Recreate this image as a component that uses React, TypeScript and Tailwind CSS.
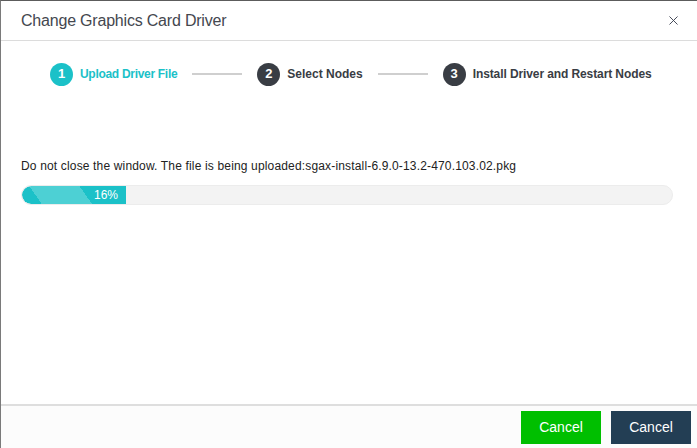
import { X } from 'lucide-react';

const steps = [
  { n: 1, label: 'Upload Driver File', active: true, track: 'tracking-[-0.3px]' },
  { n: 2, label: 'Select Nodes', active: false, track: 'tracking-[0px]' },
  { n: 3, label: 'Install Driver and Restart Nodes', active: false, track: 'tracking-[-0.1px]' },
];

export default function App() {
  const progress = 16;

  return (
    <div className="w-[697px] h-[448px] bg-white flex flex-col border-t border-t-[#5c5c5c] border-l border-l-[#7a7a7a] font-['Liberation_Sans',Arial,sans-serif] text-[#333] overflow-hidden">
      {/* header */}
      <div className="h-[40px] shrink-0 flex items-center justify-between pl-[20px] pr-[16px] border-b border-[#dcdcdc]">
        <span className="text-[16px] text-[#44474f] tracking-[-0.2px]">Change Graphics Card Driver</span>
        <X className="w-[15px] h-[15px] text-[#3c4150]" strokeWidth={1.5} />
      </div>

      {/* steps */}
      <div className="h-[65px] shrink-0 flex items-center pl-[49px] pt-[1px]">
        {steps.map((s, i) => (
          <div key={s.n} className="flex items-center">
            {i > 0 && <div className="w-[50px] h-[2px] bg-[#cfcfcf] mx-[15px]" />}
            <div className={`w-[23px] h-[23px] rounded-full flex items-center justify-center text-white text-[13px] font-bold ${s.active ? 'bg-[#1bc1c8]' : 'bg-[#393d44]'}`}>
              {s.n}
            </div>
            <span className={`ml-[7px] text-[12px] font-bold ${s.track} ${s.active ? 'text-[#1bc1c8]' : 'text-[#393d44]'}`}>{s.label}</span>
          </div>
        ))}
      </div>

      {/* body */}
      <div className="flex-1 px-[20px] pt-[53px]">
        <p className="text-[12px] leading-[14px] text-[#222] tracking-[0.16px]">
          Do not close the window. The file is being uploaded:sgax-install-6.9.0-13.2-470.103.02.pkg
        </p>
        <div className="mt-[12px] w-[652px] h-[20px] rounded-full bg-[#f3f3f3] border border-[#ececec] overflow-hidden">
          <div
            className="h-full flex items-center justify-end pr-[8px] rounded-l-full bg-[linear-gradient(55deg,#1bc1c8_0%,#1bc1c8_17%,#4dd0d4_17%,#4dd0d4_60%,#1bc1c8_60%,#1bc1c8_100%)]"
            style={{ width: `${progress}%` }}
          >
            <span className="text-white text-[12px]">{progress}%</span>
          </div>
        </div>
      </div>

      {/* footer */}
      <div className="h-[44px] shrink-0 border-t-2 border-[#dedede] bg-[#fcfcfc] flex items-start justify-end gap-[10px] pr-[6px] pt-[5px]">
        <button className="w-[80px] h-[33px] bg-[#00bf00] text-white text-[14px]">Cancel</button>
        <button className="w-[80px] h-[33px] bg-[#233e54] text-white text-[14px]">Cancel</button>
      </div>
    </div>
  );
}
